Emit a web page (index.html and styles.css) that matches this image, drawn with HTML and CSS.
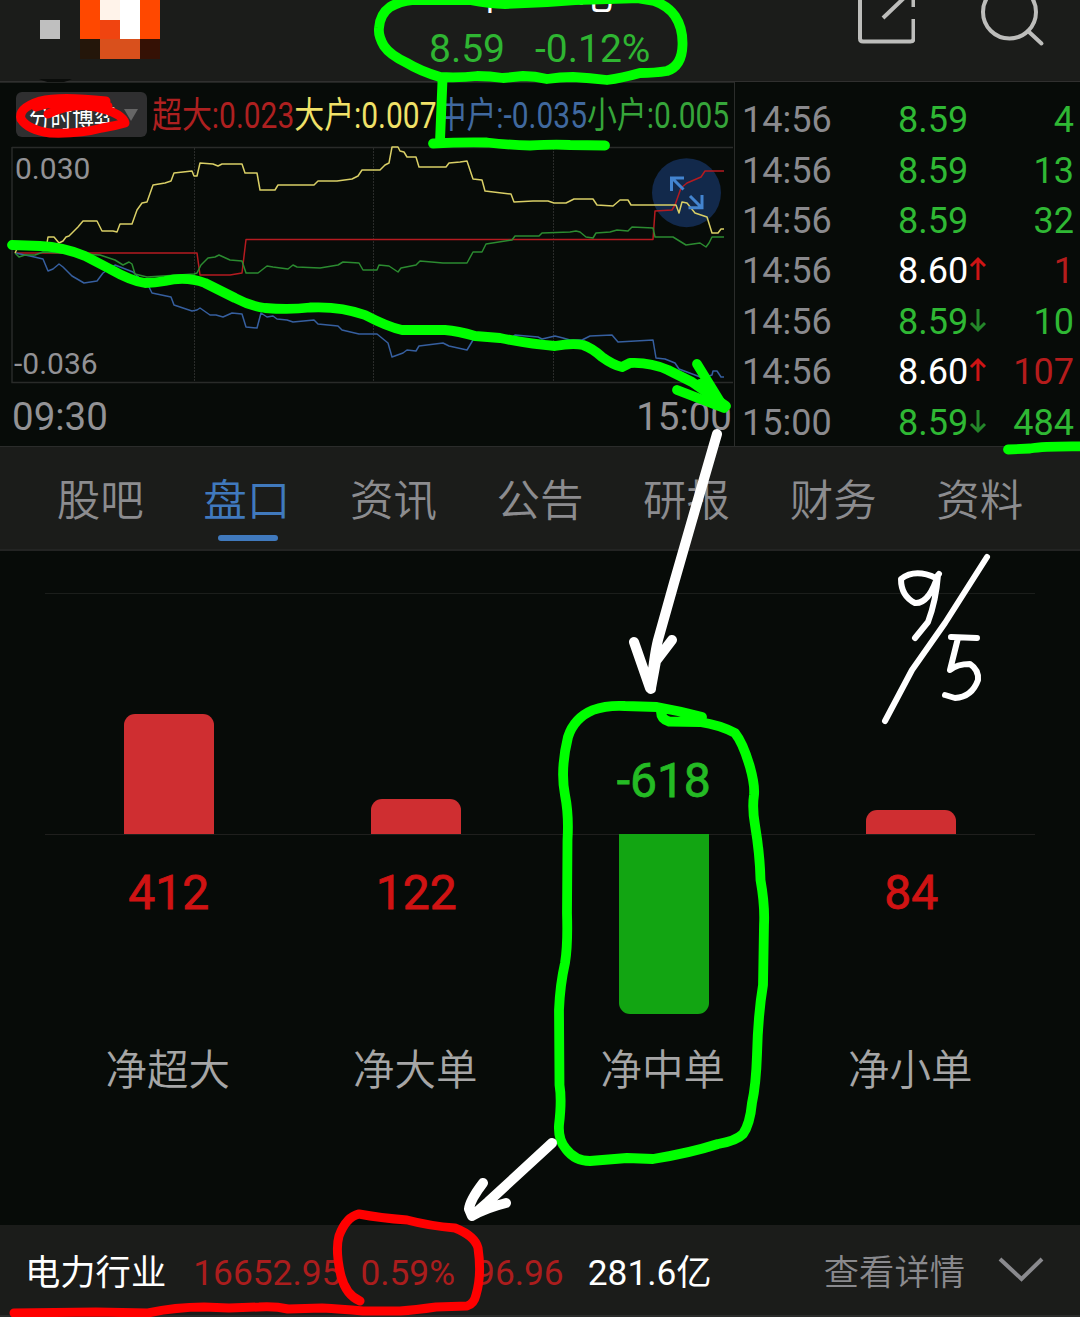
FILE: index.html
```
<!DOCTYPE html>
<html lang="zh-CN">
<head>
  <meta charset="UTF-8">
  <meta name="viewport" content="width=device-width, initial-scale=1.0">
  <title>盘口</title>
  <link rel="stylesheet" href="styles.css">
</head>
<body>
  <div class="app">
    <header class="topbar">
      <svg class="avatar" width="180" height="84" viewBox="0 0 180 84">
        <rect x="40" y="20" width="20" height="19" fill="#bfbfbf"/>
        <rect x="80" y="0" width="80" height="39" fill="#ff4800"/>
        <rect x="100" y="0" width="20" height="20" fill="#fff3ea"/>
        <rect x="100" y="20" width="20" height="19" fill="#f04410"/>
        <rect x="120" y="0" width="20" height="39" fill="#fff"/>
        <rect x="80" y="39" width="20" height="20" fill="#24160a"/>
        <rect x="100" y="39" width="40" height="20" fill="#d9501c"/>
        <rect x="140" y="39" width="20" height="20" fill="#351105"/>
        <path d="M39 79H72Q56 87 39 79Z" fill="#0a0c0a"/>
      </svg>
      <div class="quote">
        <div class="stock-name"><span>中</span><span>电</span></div>
        <div class="stock-price"><span>8.59</span><span>-0.12%</span></div>
      </div>
      <div class="actions">
        <svg width="60" height="60" viewBox="855 0 60 60">
          <path d="M860 -5V38.500Q860 41.500 863 41.500H910.500Q913.500 41.500 913.500 38.500V19M913.500 7V-5M883 18L904 -2"/>
        </svg>
        <svg width="68" height="60" viewBox="980 0 68 60">
          <circle cx="1009.500" cy="12" r="26.500"/>
          <path d="M1028 31L1041.500 43.500" stroke-linecap="round"/>
        </svg>
      </div>
    </header>

    <section class="market">
      <div class="flow">
        <div class="legend-row">
          <button class="picker"><span>分时博弈</span><i></i></button>
          <div class="legend">
            <span class="red">超大:0.023</span><span class="yellow">大户:0.007</span><span class="blue">中户:-0.035</span><span class="green">小户:0.005</span>
          </div>
        </div>
        <div class="chart">
          <svg class="lines" width="734" height="238" viewBox="0 146 734 238">
            <path class="frame" d="M12 147.500H733M12 147V382.500H733"/>
            <path class="grid" d="M194.500 148V382M373.500 148V382M553.500 148V382"/>
            <circle cx="686.500" cy="192.700" r="34.500" fill="#12294b"/>
            <polyline class="l-red" points="15,253 197,253 200,275 230,275 242,273 246,239.500 653,239.500 655,211 672,210 675,205 681,188 687,183 701,177 705,171 724,171"/>
            <polyline class="l-blue" points="15,253 30,256 43,259 48,271 53,269 59,264 63,267 72,276 84,283 97,281 103,273 115,265 133,272 149,287 152,293 171,297 174,305 192,311 197,310 200,308 210,315 216,315 223,317 232,313 242,314 246,327 257,328 261,313 267,317 273,316 277,319 287,320 293,322 314,320 318,324 338,326 342,330 359,334 377,334 388,343 392,357 403,353 407,350 416,351 419,346 443,343 449,346 467,350 473,340 512,337 515,335 538,337 542,339 555,336 563,338 570,340 582,340 590,336 612,335 618,342 653,340 656,358 665,359 675,363 679,369 703,378 712,375 713,371 717,371 721,377 724,377"/>
            <polyline class="l-green" points="15,253 19,257 25,255 35,255 43,252 100,255 115,260 123,265 129,262 132,264 135,274 147,277 194,274 197,273 201,265 208,258 215,257 219,255 230,260 242,261 246,273 258,273 267,266 273,267 288,269 293,265 297,267 320,268 338,265 343,262 359,263 363,270 377,270 379,265 389,266 398,272 401,268 416,265 420,261 443,263 467,263 473,252 482,252 486,244 512,240 515,236 539,236 542,233 570,232 576,231 580,232 586,237 593,238 596,233 610,232 617,230 628,231 632,227 653,228 655,237 673,237 686,245 700,243 706,247 709,243 712,237 724,237"/>
            <polyline class="l-yellow" points="15,253 17,249 47,243 48,237 54,237 59,243 63,241 66,237 69,236 74,231 78,227 83,221 97,221 102,231 113,231 117,232 120,224 132,224 137,210 142,203 147,202 153,185 165,183 171,181 174,173 192,171 194,176 197,176 200,163 213,164 218,166 222,164 242,164 245,173 257,173 260,190 275,190 278,185 314,185 318,181 337,181 352,179 358,176 362,170 380,170 385,165 389,163 392,147 398,147 400,151 404,152 407,157 416,157 419,167 446,167 449,163 460,162 467,161 473,179 482,180 485,191 511,194 514,202 533,201 548,201 554,203 566,203 574,199 593,199 597,205 613,206 620,200 628,200 631,205 676,205 679,213 682,202 687,203 695,213 707,217 712,233 718,233 721,229 724,229"/>
            <path class="expand" d="M684 178H671.500V191M672.500 178.500L683.500 189.500M690 196L701 207M702 195V207.700H688.500"/>
          </svg>
          <span class="y-max">0.030</span>
          <span class="y-min">-0.036</span>
        </div>
        <div class="times"><span>09:30</span><span>15:00</span></div>
      </div>

      <div class="ticks">
        <div class="tick"><span>14:56</span><b class="up-g">8.59</b><em class="up-g">4</em></div>
        <div class="tick"><span>14:56</span><b class="up-g">8.59</b><em class="up-g">13</em></div>
        <div class="tick"><span>14:56</span><b class="up-g">8.59</b><em class="up-g">32</em></div>
        <div class="tick"><span>14:56</span><b>8.60</b><svg class="arrow a-up" width="18" height="26" viewBox="0 0 18 26"><path d="M9 24V4M2 10L9 3L16 10"/></svg><em class="dn-r">1</em></div>
        <div class="tick"><span>14:56</span><b class="up-g">8.59</b><svg class="arrow a-down" width="18" height="26" viewBox="0 0 18 26"><path d="M9 2V22M2 16L9 23L16 16"/></svg><em class="up-g">10</em></div>
        <div class="tick"><span>14:56</span><b>8.60</b><svg class="arrow a-up" width="18" height="26" viewBox="0 0 18 26"><path d="M9 24V4M2 10L9 3L16 10"/></svg><em class="dn-r">107</em></div>
        <div class="tick"><span>15:00</span><b class="up-g">8.59</b><svg class="arrow a-down" width="18" height="26" viewBox="0 0 18 26"><path d="M9 2V22M2 16L9 23L16 16"/></svg><em class="up-g">484</em></div>
      </div>
    </section>

    <nav class="tabs">
      <a>股吧</a>
      <a class="active">盘口</a>
      <a>资讯</a>
      <a>公告</a>
      <a>研报</a>
      <a>财务</a>
      <a>资料</a>
    </nav>

    <section class="orders">
      <div class="col">
        <div class="above"><div class="bar" style="height: 120px"></div></div>
        <div class="below"><span class="value">412</span></div>
        <div class="name">净超大</div>
      </div>
      <div class="col">
        <div class="above"><div class="bar" style="height: 35px"></div></div>
        <div class="below"><span class="value">122</span></div>
        <div class="name">净大单</div>
      </div>
      <div class="col out">
        <div class="above"><span class="value">-618</span></div>
        <div class="below"><div class="bar" style="height: 180px"></div></div>
        <div class="name">净中单</div>
      </div>
      <div class="col">
        <div class="above"><div class="bar" style="height: 24px"></div></div>
        <div class="below"><span class="value">84</span></div>
        <div class="name">净小单</div>
      </div>
    </section>

    <footer class="industry">
      <span class="ind-name">电力行业</span>
      <span class="ind-red">16652.95</span>
      <span class="ind-red">0.59%</span>
      <span class="ind-red">96.96</span>
      <span class="ind-sum">281.6亿</span>
      <span class="ind-more">查看详情</span>
      <svg width="46" height="28" viewBox="0 0 46 28"><path d="M2 3L23.500 23L44 3"/></svg>
    </footer>

    <!-- hand-drawn marks -->
    <svg class="marks" width="1080" height="1317" viewBox="0 0 1080 1317">
      <g class="m-green">
        <path d="M630 -3L654 1Q668 6 675 16Q683 28 682.500 45Q682 66 667 71Q655 73 640 73Q622 78 607 80Q590 78 573 77Q560 77 547 79Q535 76 523 76L503 78Q490 76 477 76Q460 78 440 77Q420 71 407 63Q390 55 384 46Q378 36 379 28Q380 14 390 7Q400 1 412 0L470 0Q490 4 505 4Q540 3 575 0L640 -2"/>
        <path d="M442.500 80L440 141M433 143.500Q460 142 487 142.500Q510 145 530 145.500Q555 144 570 145L605 145.500"/>
        <path d="M12 245L40 246Q63 247 85 256L110 269Q131 281 145 283Q155 283 165 281Q186 276 205 283L235 298Q250 306 265 308Q290 310 310 307.500Q340 306 365 315Q388 327 402 330L445 330Q458 331 475 336L500 338Q530 344 555 346Q572 343 583 345Q592 348 602 357Q613 365 622 367L630 363Q650 362 668 370L692 382L726 406"/>
        <path d="M697 364L724 408L677 390M700 384L720 402"/>
        <path d="M1008 449.500L1030 448.500Q1045 446 1085 446.500"/>
        <path d="M661 712Q661 719 669 721.500L700 722Q720 725 735 733Q743 743 750 767Q755 785 754 795Q752 808 755 825Q760 855 760.500 880Q765 905 764 925L763 985Q758 1015 757 1055Q756 1085 752 1103Q750 1124 743 1134Q736 1141 718 1144Q690 1153 653 1159L627 1158L590 1161Q575 1161 566 1149Q558 1140 559 1125Q562 1100 559.500 1085L559 1010Q560 985 565 963Q568 945 567 913L567.500 840Q569 815 565 795Q560 770 568 737Q574 718 593 710Q607 705 625 706L657 707Q680 711 702 717"/>
      </g>
      <g class="m-white">
        <path d="M717 434L697 503L674 583L658 640Q654 656 651 689M634 642L650 688M672 640L656 661L651 688"/>
        <path d="M552 1143L488 1202L472 1216M483 1183Q470 1200 469 1209L472 1216Q486 1208 506 1203"/>
        <g class="thin">
          <path d="M987 557L945 623L912 670L885 721"/>
          <path d="M939 574L936 578Q915 568 901 579Q901 596 915 603Q929 604 938 575Q936 601 928 622L915 638"/>
          <path d="M977 638L951 637M958 638L950 670Q957 664 970 664Q979 670 978 680Q972 697 955 698L945 695"/>
        </g>
      </g>
      <g class="m-red">
        <path d="M106 101Q60 96 40 101Q18 108 21 119Q28 130 50 133Q80 134 102 128Q115 126 125 123Q122 113 96 107Q72 102 48 114M36 107Q70 96 108 106"/>
        <path d="M360 1301Q346 1295 341 1276Q335 1250 339 1236Q346 1217 359 1214Q380 1218 407 1220Q430 1226 455 1228Q475 1236 478 1248Q482 1275 476 1295Q474 1304 467 1306L436 1307Q415 1310 400 1311L363 1311Q340 1309 322 1308L288 1309Q275 1306 259 1307L229 1308L204 1307Q175 1307 148 1313L96 1312L14 1313"/>
      </g>
    </svg>
  </div>
</body>
</html>
```

FILE: styles.css
```
* {
  box-sizing: border-box;
}

body {
  margin: 0;
  background-color: #070b08;
  font-family: Roboto, "Noto Sans CJK SC", sans-serif;
  color: #fff;
}

.app {
  position: relative;
  width: 1080px;
  height: 1317px;
  overflow: hidden;
  display: flex;
  flex-direction: column;
}

.topbar {
  height: 82px;
  display: flex;
  align-items: flex-start;
  justify-content: space-between;
  background-color: #1b1c1a;
  border-bottom: 1px solid #30302f;
}

.topbar svg {
  flex: none;
}

.quote {
  width: 224px;
  margin-left: 249px;
  display: flex;
  flex-direction: column;
  align-items: flex-start;
}

.stock-name {
  display: flex;
  gap: 66px;
  height: 27px;
  margin-left: 42px;
  font-size: 38px;
  line-height: 38px;
  margin-top: -23px;
  white-space: nowrap;
}

.stock-price {
  display: flex;
  gap: 30px;
  margin-top: 22px;
  font-size: 39px;
  line-height: 46px;
  color: #2fb532;
}

.actions {
  display: flex;
  gap: 65px;
  margin-left: auto;
  padding-right: 32px;
}

.actions svg {
  fill: none;
  stroke: #bdbdbb;
  stroke-width: 4;
}

.market {
  display: flex;
  height: 364px;
}

.flow {
  width: 735px;
  border-right: 1px solid #2b2d2b;
  display: flex;
  flex-direction: column;
}

.legend-row {
  height: 64px;
  display: flex;
  padding: 9px 0 0 16px;
  border-top: 1px solid #222422;
}

.picker {
  flex: none;
  width: 131px;
  height: 45px;
  padding: 3px 9px 0 13px;
  border: none;
  border-radius: 6px;
  background-color: #2f2f30;
  color: #fff;
  font: 27px "Noto Sans CJK SC", sans-serif;
  display: flex;
  align-items: center;
  justify-content: space-between;
}

.picker span {
  width: 86px;
  white-space: nowrap;
  transform: scaleX(0.8);
  transform-origin: left;
}

.picker i {
  border: 7px solid transparent;
  border-top: 12px solid #666;
  border-bottom: none;
  margin-top: -3px;
}

.legend {
  flex: none;
  width: 690px;
  margin-top: 2px;
  margin-left: 5px;
  margin-right: -121px;
  font-size: 36px;
  line-height: 45px;
  white-space: nowrap;
  transform: scaleX(0.831);
  transform-origin: left;
}

.red { color: #ae2020; }
.yellow { color: #f0e268; }
.blue { color: #40699f; }
.green { color: #36a53a; }

.chart {
  position: relative;
  height: 238px;
}

.lines {
  display: block;
  fill: none;
}

.lines polyline {
  fill: none;
  stroke-width: 1.5;
  stroke-linejoin: round;
}

.frame { stroke: #292b29; stroke-width: 1.5; }
.grid { stroke: #2a2c2a; stroke-dasharray: 2 1; }
.l-red { stroke: #b51b20; }
.l-yellow { stroke: #d9cf66; }
.l-green { stroke: #2b8b30; }
.l-blue { stroke: #365f9f; }

.expand {
  stroke: #4384cf;
  stroke-width: 3;
}

.y-max,
.y-min {
  position: absolute;
  left: 15px;
  font-size: 30px;
  line-height: 30px;
  color: #929295;
}

.y-max { top: 8px; }
.y-min { bottom: 5px; left: 14px; }

.times {
  display: flex;
  justify-content: space-between;
  padding: 10px 2px 0 12px;
  font-size: 38.5px;
  line-height: 46px;
  color: #929295;
}

.ticks {
  flex: 1;
  height: 364px;
  padding-top: 13px;
  overflow: hidden;
  display: flex;
  flex-direction: column;
}

.tick {
  flex: none;
  height: 50.4px;
  display: flex;
  align-items: center;
  padding: 0 6px 0 7px;
  font-size: 36px;
}

.tick span {
  width: 156px;
  color: #8a8a8e;
}

.tick b {
  width: 71px;
  font-weight: 400;
}

.tick em {
  margin-left: auto;
  font-style: normal;
}

.tick .up-g { color: #2fb834; }
.tick .dn-r { color: #b51c1c; }

.arrow {
  fill: none;
  stroke-width: 3;
}

.a-up { stroke: #cf1414; margin-top: -5px; }
.a-down { stroke: #24872a; margin-top: -4px; }

.tabs {
  height: 105px;
  display: flex;
  padding: 0 27px;
  background-color: #1b1c1a;
  border-top: 1px solid #2b2c2b;
  border-bottom: 2px solid #232423;
}

.tabs a {
  position: relative;
  flex: 1;
  text-align: center;
  font-size: 43.5px;
  line-height: 110px;
  font-weight: 350;
  color: #8c8c8f;
}

.tabs .active {
  color: #4079bd;
}

.tabs .active::after {
  content: "";
  position: absolute;
  left: 50%;
  bottom: 8px;
  width: 60px;
  height: 6px;
  margin-left: -29px;
  border-radius: 3px;
  background-color: #4079bd;
}

.orders {
  height: 632px;
  margin: 42px 45px 0;
  border-top: 1px solid #1b1e1b;
  display: flex;
}

.col {
  flex: 1;
  display: flex;
  flex-direction: column;
}

.above {
  height: 240px;
  box-shadow: 0 1px #1f1f1d;
  display: flex;
  flex-direction: column;
  align-items: center;
  justify-content: flex-end;
}

.below {
  height: 206px;
  display: flex;
  flex-direction: column;
  align-items: center;
}

.bar {
  width: 90px;
  background-color: #cf2e31;
  border-radius: 11px 11px 0 0;
}

.out .bar {
  background-color: #12a512;
  border-radius: 0 0 11px 11px;
}

.value {
  margin-top: 30px;
  font-size: 48px;
  line-height: 58px;
  font-weight: 400;
  -webkit-text-stroke: 0.8px;
  color: #d01313;
}

.out .value {
  margin: 0 0 24px;
  color: #24bb24;
}

.name {
  padding-right: 2px;
  text-align: center;
  font-size: 41.5px;
  line-height: 62px;
  font-weight: 350;
  color: #a6a6a6;
}

.industry {
  height: 92px;
  display: flex;
  align-items: center;
  padding: 5px 36px 0 25px;
  background-color: #1b1c1a;
  border-bottom: 2px solid #2a2b2a;
  font-size: 35.3px;
  line-height: 52px;
  white-space: nowrap;
}

.ind-name { margin-right: 27px; }
.ind-red { color: #ab1d1d; margin-right: 20px; }
.ind-red:nth-child(2) { margin-right: 19px; }
.ind-sum { margin-left: 4px; }

.ind-more {
  margin-left: auto;
  margin-right: 33px;
  font-weight: 350;
  color: #8a8a8e;
}

.industry svg {
  margin-bottom: 5px;
  fill: none;
  stroke: #8a8a8e;
  stroke-width: 4;
}

.marks {
  position: absolute;
  left: 0;
  top: 0;
  fill: none;
  stroke-linecap: round;
  stroke-linejoin: round;
  pointer-events: none;
}

.m-green { stroke: #00ff00; stroke-width: 9.8; }
.m-white { stroke: #fff; stroke-width: 10; }
.m-red { stroke: #ff0000; stroke-width: 9; }
.thin { stroke-width: 6; }
```
